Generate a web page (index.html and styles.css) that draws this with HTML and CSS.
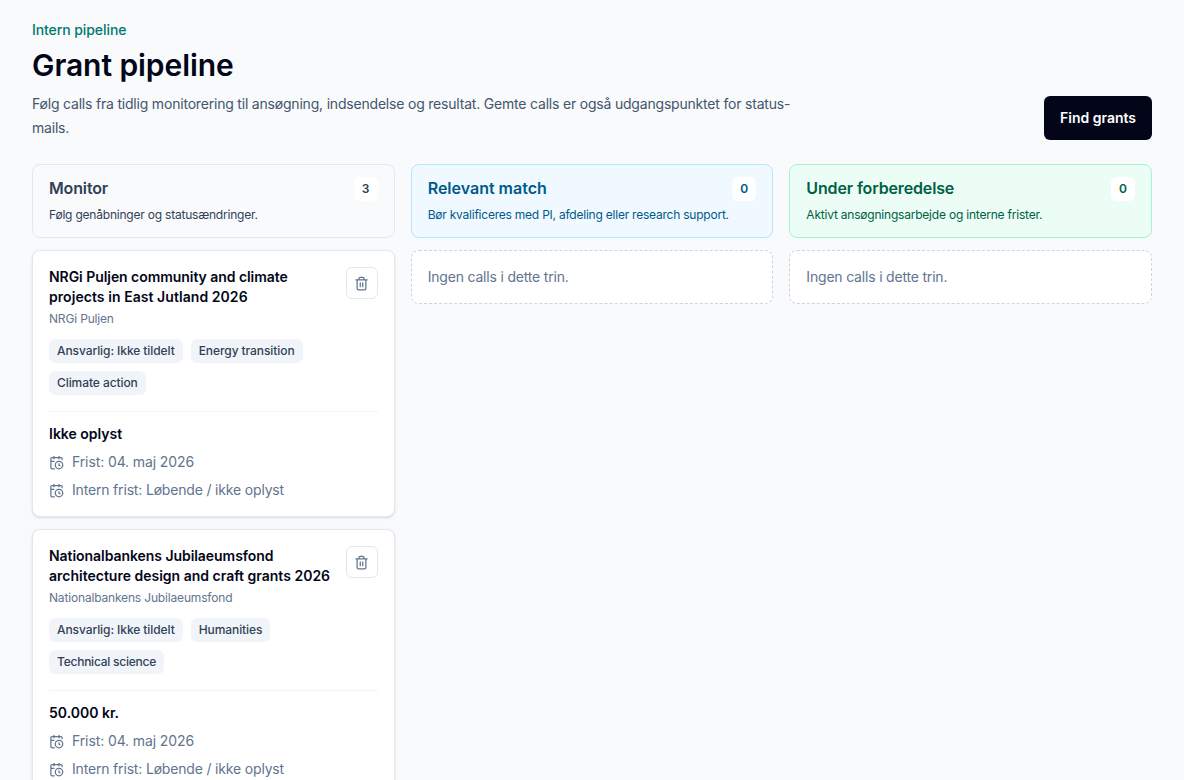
FILE: index.html
```html
<!DOCTYPE html>
<html lang="da">
<head>
<meta charset="utf-8">
<title>Grant pipeline</title>
<link rel="stylesheet" href="styles.css">
</head>
<body>
<svg width="0" height="0" class="sprite" aria-hidden="true">
  <symbol id="trash" viewBox="0 0 24 24"><path d="M3 6h18M19 6v14a2 2 0 0 1-2 2H7a2 2 0 0 1-2-2V6M8 6V4a2 2 0 0 1 2-2h4a2 2 0 0 1 2 2v2M10 11v6M14 11v6"/></symbol>
  <symbol id="calendar-clock" viewBox="0 0 24 24"><path d="M16 14v2.2l1.6 1M16 2v4M21 7.5V6a2 2 0 0 0-2-2H5a2 2 0 0 0-2 2v14a2 2 0 0 0 2 2h3.5M3 10h5M8 2v4"/><circle cx="16" cy="16" r="6"/></symbol>
</svg>
<main class="page">
  <header class="page-head">
    <div class="intro">
      <p class="eyebrow">Intern pipeline</p>
      <h1>Grant pipeline</h1>
      <p class="lead">Følg calls fra tidlig monitorering til ansøgning, indsendelse og resultat. Gemte calls er også udgangspunktet for status-<br>mails.</p>
    </div>
    <a class="button">Find grants</a>
  </header>
  <div class="board">
    <section class="column">
      <div class="stage monitor">
        <div class="stage-top"><h2>Monitor</h2><b class="count">3</b></div>
        <p>Følg genåbninger og statusændringer.</p>
      </div>
      <article class="card">
        <div class="card-top">
          <div><h3><span class="snug">NRGi Puljen community and climate</span><br><span class="loose">projects in East Jutland 2026</span></h3><p class="funder">NRGi Puljen</p></div>
          <button class="remove" aria-label="Fjern"><svg class="icon"><use href="#trash"/></svg></button>
        </div>
        <div class="tags"><span class="tag">Ansvarlig: Ikke tildelt</span><span class="tag">Energy transition</span><span class="tag">Climate action</span></div>
        <div class="details">
          <p class="amount">Ikke oplyst</p>
          <p class="date"><svg class="icon"><use href="#calendar-clock"/></svg><span>Frist: 04. maj 2026</span></p>
          <p class="date internal"><svg class="icon"><use href="#calendar-clock"/></svg><span>Intern frist: Løbende / ikke oplyst</span></p>
        </div>
      </article>
      <article class="card">
        <div class="card-top">
          <div><h3><span class="snug">Nationalbankens Jubilaeumsfond</span><br>architecture design and craft grants 2026</h3><p class="funder">Nationalbankens Jubilaeumsfond</p></div>
          <button class="remove" aria-label="Fjern"><svg class="icon"><use href="#trash"/></svg></button>
        </div>
        <div class="tags"><span class="tag">Ansvarlig: Ikke tildelt</span><span class="tag">Humanities</span><span class="tag condensed">Technical science</span></div>
        <div class="details">
          <p class="amount">50.000 kr.</p>
          <p class="date"><svg class="icon"><use href="#calendar-clock"/></svg><span>Frist: 04. maj 2026</span></p>
          <p class="date internal"><svg class="icon"><use href="#calendar-clock"/></svg><span>Intern frist: Løbende / ikke oplyst</span></p>
        </div>
      </article>
    </section>
    <section class="column">
      <div class="stage relevant">
        <div class="stage-top"><h2>Relevant match</h2><b class="count">0</b></div>
        <p>Bør kvalificeres med PI, afdeling eller research support.</p>
      </div>
      <p class="empty">Ingen calls i dette trin.</p>
    </section>
    <section class="column">
      <div class="stage preparing">
        <div class="stage-top"><h2>Under forberedelse</h2><b class="count">0</b></div>
        <p>Aktivt ansøgningsarbejde og interne frister.</p>
      </div>
      <p class="empty">Ingen calls i dette trin.</p>
    </section>
  </div>
</main>
</body>
</html>
```
FILE: styles.css
```css
* { box-sizing: border-box; }
body { margin: 0; height: 780px; overflow: hidden; background: #f8fafc; color: #020618; font: 14px/20px Inter, "Liberation Sans", sans-serif; }
h1, h2, h3, p { margin: 0; }
.sprite { position: absolute; }
.page { padding: 20px 32px; }
.page-head { display: flex; justify-content: space-between; align-items: flex-end; }
.eyebrow { color: #00786f; font-weight: 500; letter-spacing: -.08px; }
h1 { margin-top: 7px; font-size: 30px; line-height: 36px; font-weight: 600; letter-spacing: -.07px; }
.lead { margin-top: 9px; line-height: 24px; color: #45556c; letter-spacing: -.198px; white-space: nowrap; }
.button { display: flex; align-items: center; justify-content: center; width: 108px; height: 44px; border-radius: 6px; background: #020618; color: #fff; font-weight: 600; white-space: nowrap; }
.board { display: grid; grid-template-columns: repeat(3, minmax(0, 1fr)); gap: 16px; margin-top: 24px; align-items: start; }
.column { display: grid; gap: 12px; }
.stage { padding: 12px 16px; border: 1px solid; border-radius: 8px; }
.stage-top { display: flex; justify-content: space-between; align-items: center; height: 24px; }
.stage h2 { padding-bottom: 2px; font-size: 16px; line-height: 22px; font-weight: 600; }
.stage p { margin-top: 4px; font-size: 12px; line-height: 20px; letter-spacing: -.21px; white-space: nowrap; }
.monitor { background: #f8fafc; border-color: #e2e8f0; color: #314158; }
.monitor h2, .preparing h2 { letter-spacing: -.14px; }
.relevant { background: #f0f9ff; border-color: #b8e6fe; color: #00598a; }
.relevant p { letter-spacing: -.225px; }
.preparing { background: #ecfdf5; border-color: #a4f4cf; color: #006045; }
.count { display: grid; place-items: center; width: 24px; height: 24px; border-radius: 6px; background: #fff; font-size: 12px; line-height: 16px; font-weight: 600; }
.card { padding: 16px; border: 1px solid #e2e8f0; border-radius: 8px; background: #fff; box-shadow: 0 1px 3px rgba(0,0,0,.1), 0 1px 2px -1px rgba(0,0,0,.1); }
.card-top { display: flex; justify-content: space-between; align-items: flex-start; white-space: nowrap; }
h3 { font-size: 14px; line-height: 20px; font-weight: 600; }
.snug { letter-spacing: -.055px; }
.loose { letter-spacing: .06px; }
.funder { margin-top: 4px; font-size: 12px; line-height: 16px; letter-spacing: -.17px; color: #62748e; }
.remove { display: grid; place-items: center; flex: none; width: 32px; height: 32px; padding: 0; border: 1px solid #e2e8f0; border-radius: 6px; background: #fff; color: #62748e; }
.icon { flex: none; width: 15px; height: 15px; fill: none; stroke: currentColor; stroke-width: 2; stroke-linecap: round; stroke-linejoin: round; }
.tags { display: flex; flex-wrap: wrap; gap: 8px; margin-top: 12px; }
.tag { padding: 4px 8px; border-radius: 6px; background: #f1f5f9; color: #314158; font-size: 12px; line-height: 16px; font-weight: 500; letter-spacing: -.08px; white-space: nowrap; }
.condensed { letter-spacing: -.24px; }
.details { display: grid; gap: 8px; margin-top: 16px; padding-top: 12px; border-top: 1px solid #f1f5f9; }
.amount { font-weight: 600; }
.date { display: flex; align-items: center; gap: 8px; color: #62748e; letter-spacing: -.11px; }
.internal { letter-spacing: -.175px; }
.empty { padding: 16px; border: 1px dashed #cad5e2; border-radius: 8px; background: #fff; color: #62748e; letter-spacing: -.19px; }
```
